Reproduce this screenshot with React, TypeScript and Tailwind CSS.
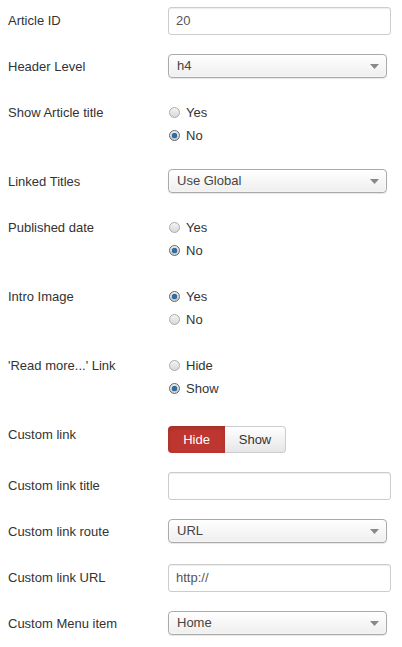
import { ReactNode } from "react";

function Label({ children }: { children: ReactNode }) {
  return <div className="w-[168px] shrink-0 pl-2 leading-[28px] text-[13px] text-[#333]">{children}</div>;
}

function TextInput({ value }: { value: string }) {
  return (
    <div className="h-[28px] w-[223px] rounded-[3px] border border-[#ccc] bg-white px-[7px] leading-[26px] text-[13px] text-[#555] shadow-[inset_0_1px_1px_rgba(0,0,0,0.075)]">
      {value}
    </div>
  );
}

function Select({ value }: { value: string }) {
  return (
    <div className="mt-px flex h-[24px] w-[219px] items-center justify-between rounded-[4px] border border-[#aaa] bg-gradient-to-b from-white to-[#eee] pl-[8px] pr-[7px] text-[13px] text-[#444] shadow-[0_0_3px_white_inset,0_1px_1px_rgba(0,0,0,0.1)]">
      <span>{value}</span>
      <svg width="9" height="5" viewBox="0 0 9 5">
        <path d="M0 0h9L4.5 5z" fill="#888" />
      </svg>
    </div>
  );
}

function Radio({ label, checked }: { label: string; checked?: boolean }) {
  return (
    <div className="flex h-[23px] items-center gap-[6px] pl-[1px] text-[13px] text-[#333]">
      <span
        className={`flex h-[11px] w-[11px] items-center justify-center rounded-full border ${
          checked ? "border-[#666] bg-gradient-to-b from-[#f4f4f4] to-[#ccc]" : "border-[#aaa] bg-gradient-to-b from-[#f4f4f4] to-[#d8d8d8]"
        }`}
      >
        {checked && <span className="h-[5px] w-[5px] rounded-full bg-[#2a6fa8] shadow-[0_0_1px_#0c3b66]" />}
      </span>
      <span>{label}</span>
    </div>
  );
}

function RadioRow({ label, a, b, first }: { label: string; a: string; b: string; first: boolean }) {
  return (
    <div className="flex h-[50px]">
      <Label>{label}</Label>
      <div className="pt-[2px]">
        <Radio label={a} checked={first} />
        <Radio label={b} checked={!first} />
      </div>
    </div>
  );
}

export default function App() {
  return (
    <div className="min-h-[647px] w-[402px] bg-white pt-[7px] font-[family-name:'Liberation_Sans',Arial,sans-serif]">
      <div className="flex flex-col gap-[19px]">
        <div className="flex h-[27px]">
          <Label>Article ID</Label>
          <TextInput value="20" />
        </div>
        <div className="flex h-[27px]">
          <Label>Header Level</Label>
          <Select value="h4" />
        </div>
        <RadioRow label="Show Article title" a="Yes" b="No" first={false} />
        <div className="flex h-[27px]">
          <Label>Linked Titles</Label>
          <Select value="Use Global" />
        </div>
        <RadioRow label="Published date" a="Yes" b="No" first={false} />
        <RadioRow label="Intro Image" a="Yes" b="No" first={true} />
        <RadioRow label="'Read more...' Link" a="Hide" b="Show" first={false} />
        <div className="flex h-[32px]">
          <Label>Custom link</Label>
          <div className="mt-[5px] flex h-[27px] text-[13px]">
            <div className="flex w-[57px] items-center justify-center rounded-l-[4px] bg-[#bd362f] text-white shadow-[inset_0_2px_4px_rgba(0,0,0,0.15)]">
              Hide
            </div>
            <div className="flex w-[61px] items-center justify-center rounded-r-[4px] border border-l-0 border-[#ccc] bg-gradient-to-b from-white to-[#e6e6e6] text-[#333]">
              Show
            </div>
          </div>
        </div>
        <div className="flex h-[27px]">
          <Label>Custom link title</Label>
          <TextInput value="" />
        </div>
        <div className="flex h-[27px]">
          <Label>Custom link route</Label>
          <Select value="URL" />
        </div>
        <div className="flex h-[27px]">
          <Label>Custom link URL</Label>
          <TextInput value="http://" />
        </div>
        <div className="flex h-[27px]">
          <Label>Custom Menu item</Label>
          <Select value="Home" />
        </div>
      </div>
    </div>
  );
}
